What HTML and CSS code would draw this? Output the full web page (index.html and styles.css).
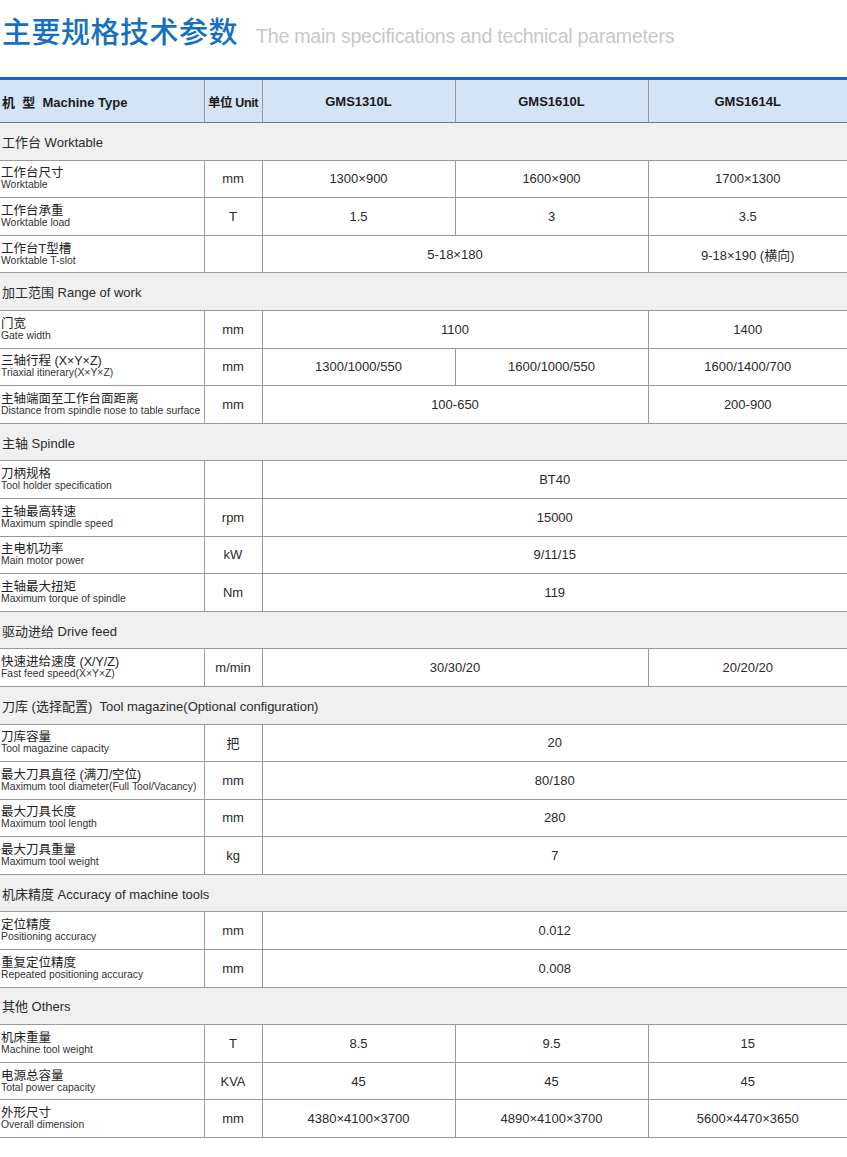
FILE: index.html
```html
<!DOCTYPE html>
<html lang="zh">
<head>
<meta charset="utf-8">
<link rel="stylesheet" href="styles.css">
</head>
<body>
<div class="title">
  <span class="title-cn">主要规格技术参数</span>
  <span class="title-en">The main specifications and technical parameters</span>
</div>
<table class="spec">
  <colgroup>
    <col class="c1"><col class="c2"><col class="c3"><col class="c4"><col class="c5">
  </colgroup>
  <thead>
    <tr class="head">
      <th class="name">机&nbsp;&nbsp;型&nbsp;&nbsp;Machine Type</th>
      <th class="unit">单位 Unit</th>
      <th>GMS1310L</th>
      <th>GMS1610L</th>
      <th>GMS1614L</th>
    </tr>
  </thead>
  <tbody>
    <tr class="sec"><td colspan="5">工作台 Worktable</td></tr>
    <tr><td class="name"><div class="cn">工作台尺寸</div><div class="en">Worktable</div></td><td>mm</td><td>1300×900</td><td>1600×900</td><td>1700×1300</td></tr>
    <tr><td class="name"><div class="cn">工作台承重</div><div class="en">Worktable load</div></td><td>T</td><td>1.5</td><td>3</td><td>3.5</td></tr>
    <tr><td class="name"><div class="cn">工作台T型槽</div><div class="en">Worktable T-slot</div></td><td></td><td colspan="2">5-18×180</td><td>9-18×190 (横向)</td></tr>

    <tr class="sec"><td colspan="5">加工范围 Range of work</td></tr>
    <tr><td class="name"><div class="cn">门宽</div><div class="en">Gate width</div></td><td>mm</td><td colspan="2">1100</td><td>1400</td></tr>
    <tr><td class="name"><div class="cn">三轴行程 (X×Y×Z)</div><div class="en">Triaxial itinerary(X×Y×Z)</div></td><td>mm</td><td>1300/1000/550</td><td>1600/1000/550</td><td>1600/1400/700</td></tr>
    <tr><td class="name"><div class="cn">主轴端面至工作台面距离</div><div class="en">Distance from spindle nose to table surface</div></td><td>mm</td><td colspan="2">100-650</td><td>200-900</td></tr>

    <tr class="sec"><td colspan="5">主轴 Spindle</td></tr>
    <tr><td class="name"><div class="cn">刀柄规格</div><div class="en">Tool holder specification</div></td><td></td><td colspan="3">BT40</td></tr>
    <tr><td class="name"><div class="cn">主轴最高转速</div><div class="en">Maximum spindle speed</div></td><td>rpm</td><td colspan="3">15000</td></tr>
    <tr><td class="name"><div class="cn">主电机功率</div><div class="en">Main motor power</div></td><td>kW</td><td colspan="3">9/11/15</td></tr>
    <tr><td class="name"><div class="cn">主轴最大扭矩</div><div class="en">Maximum torque of spindle</div></td><td>Nm</td><td colspan="3">119</td></tr>

    <tr class="sec"><td colspan="5">驱动进给 Drive feed</td></tr>
    <tr><td class="name"><div class="cn">快速进给速度 (X/Y/Z)</div><div class="en">Fast feed speed(X×Y×Z)</div></td><td>m/min</td><td colspan="2">30/30/20</td><td>20/20/20</td></tr>

    <tr class="sec"><td colspan="5">刀库 (选择配置)&nbsp; Tool magazine(Optional configuration)</td></tr>
    <tr><td class="name"><div class="cn">刀库容量</div><div class="en">Tool magazine capacity</div></td><td>把</td><td colspan="3">20</td></tr>
    <tr><td class="name"><div class="cn">最大刀具直径 (满刀/空位)</div><div class="en">Maximum tool diameter(Full Tool/Vacancy)</div></td><td>mm</td><td colspan="3">80/180</td></tr>
    <tr><td class="name"><div class="cn">最大刀具长度</div><div class="en">Maximum tool length</div></td><td>mm</td><td colspan="3">280</td></tr>
    <tr><td class="name"><div class="cn">最大刀具重量</div><div class="en">Maximum tool weight</div></td><td>kg</td><td colspan="3">7</td></tr>

    <tr class="sec"><td colspan="5">机床精度 Accuracy of machine tools</td></tr>
    <tr><td class="name"><div class="cn">定位精度</div><div class="en">Positioning accuracy</div></td><td>mm</td><td colspan="3">0.012</td></tr>
    <tr><td class="name"><div class="cn">重复定位精度</div><div class="en">Repeated positioning accuracy</div></td><td>mm</td><td colspan="3">0.008</td></tr>

    <tr class="sec"><td colspan="5">其他 Others</td></tr>
    <tr><td class="name"><div class="cn">机床重量</div><div class="en">Machine tool weight</div></td><td>T</td><td>8.5</td><td>9.5</td><td>15</td></tr>
    <tr><td class="name"><div class="cn">电源总容量</div><div class="en">Total power capacity</div></td><td>KVA</td><td>45</td><td>45</td><td>45</td></tr>
    <tr><td class="name"><div class="cn">外形尺寸</div><div class="en">Overall dimension</div></td><td>mm</td><td>4380×4100×3700</td><td>4890×4100×3700</td><td>5600×4470×3650</td></tr>
  </tbody>
</table>
</body>
</html>
```

FILE: styles.css
```css
html, body {
  margin: 0;
  padding: 0;
  background: #ffffff;
}
body {
  width: 847px;
  font-family: "Liberation Sans", "Noto Sans CJK SC", sans-serif;
  color: #2a2a2a;
}
.title {
  height: 77px;
  box-sizing: border-box;
  padding: 9px 0 0 2px;
  display: flex;
  align-items: baseline;
  white-space: nowrap;
}
.title-cn {
  font-family: "Noto Sans CJK SC", sans-serif;
  font-size: 29px;
  font-weight: 500;
  color: #1570c2;
  letter-spacing: 0.5px;
}
.title-en {
  margin-left: 18px;
  font-size: 19.6px;
  color: #c8c8c8;
  letter-spacing: -0.25px;
}
.spec {
  width: 847px;
  border-collapse: collapse;
  table-layout: fixed;
  border-top: 3px solid #1568c0;
}
.c1 { width: 204px; }
.c2 { width: 58px; }
.c3 { width: 193px; }
.c4 { width: 193px; }
.c5 { width: 199px; }
.spec th, .spec td {
  padding: 0;
  border: 1px solid #9a9a9a;
  text-align: center;
  font-size: 13px;
  font-weight: normal;
  color: #2a2a2a;
}
.spec tr {
  height: 37.6px;
}
.spec tr.head {
  height: 44px;
}
.spec tr.head th {
  background: #d3e4f6;
  font-weight: bold;
  font-size: 13px;
  color: #1a1a1a;
  border-bottom: 1px solid #777;
  border-top: none;
}
.spec tr.head th.unit {
  font-size: 12.5px;
  letter-spacing: -0.4px;
  white-space: nowrap;
}
.spec tr.head th.name {
  text-align: left;
  padding-left: 2px;
}
.spec th:first-child, .spec td:first-child {
  border-left: none;
}
.spec th:last-child, .spec td:last-child {
  border-right: none;
}
.spec tr.sec td {
  background: #f0f0f0;
  text-align: left;
  padding-left: 2px;
  font-size: 13px;
  border-left: none;
  border-right: none;
}
.spec td.name {
  text-align: left;
  padding-left: 1px;
  vertical-align: middle;
}
.cn {
  font-size: 12.5px;
  line-height: 13px;
  color: #222;
}
.en {
  font-size: 10.4px;
  line-height: 10px;
  color: #333;
  white-space: nowrap;
}
```
